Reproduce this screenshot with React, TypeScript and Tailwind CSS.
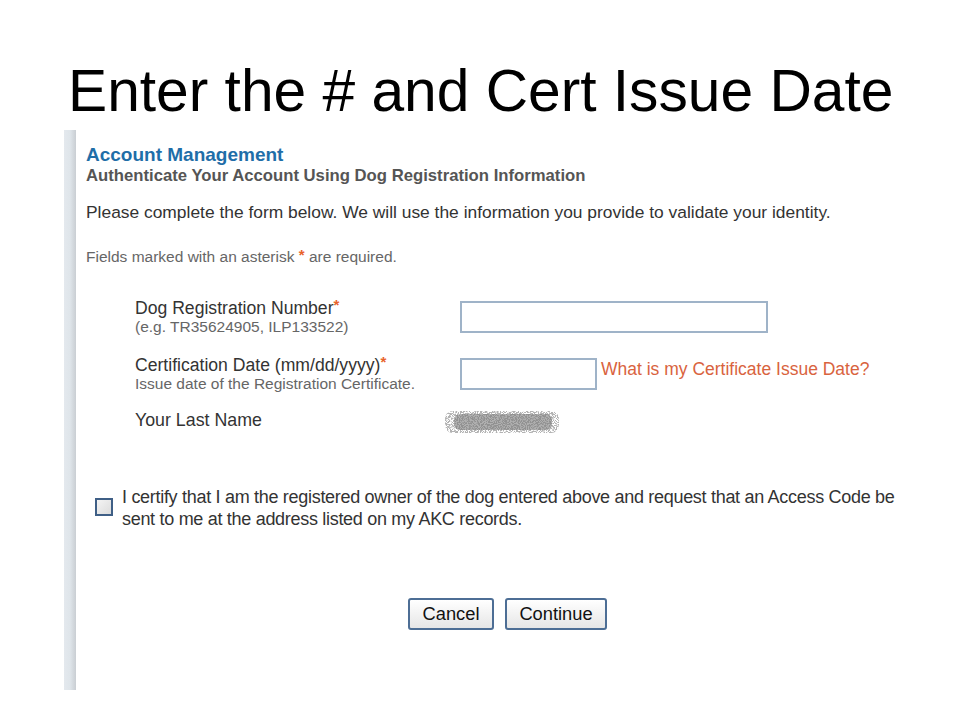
const font = { fontFamily: '"Liberation Sans", Arial, sans-serif' };

const Req = () => <span className="text-[#e8632b] align-top text-[15px] font-bold leading-none">*</span>;

export default function App() {
  return (
    <div className="w-[960px] h-[720px] bg-white overflow-hidden" style={font}>
      <h1 className="text-[58.7px] leading-none text-black pt-[62px] pl-[68px]">
        Enter the # and Cert Issue Date
      </h1>
      <div className="flex mt-[9px] pl-[64px]">
        <div className="w-[12px] h-[560px] bg-gradient-to-r from-[#e4e9ee] via-[#dfe5ea] to-[#c9ced3]" />
        <div className="pl-[10px] pt-[14px] flex-1">
          <div className="text-[19px] font-bold text-[#1f6ea8] leading-[22px]">Account Management</div>
          <div className="text-[16.7px] font-bold text-[#555] leading-[20px]">
            Authenticate Your Account Using Dog Registration Information
          </div>
          <div className="text-[17.4px] text-[#333] mt-[15px] leading-[22px]">
            Please complete the form below. We will use the information you provide to validate your identity.
          </div>
          <div className="text-[15.5px] text-[#666] mt-[24px] leading-[20px]">
            Fields marked with an asterisk <Req /> are required.
          </div>

          <div className="mt-[30px] pl-[49px] flex flex-col">
            <div className="flex h-[57px]">
              <div className="w-[325px]">
                <div className="text-[17.6px] text-[#333] leading-[22px]">Dog Registration Number<Req /></div>
                <div className="text-[15.5px] text-[#666] leading-[16px]">(e.g. TR35624905, ILP133522)</div>
              </div>
              <div className="w-[308px] h-[32px] border-2 border-[#9fb3c8] bg-white mt-[4px]" />
            </div>
            <div className="flex h-[55px]">
              <div className="w-[325px]">
                <div className="text-[17.6px] text-[#333] leading-[22px]">Certification Date (mm/dd/yyyy)<Req /></div>
                <div className="text-[15.5px] text-[#666] leading-[16px]">Issue date of the Registration Certificate.</div>
              </div>
              <div className="w-[137px] h-[32px] border-2 border-[#9fb3c8] bg-white mt-[4px]" />
              <div className="text-[17.5px] text-[#d9633e] ml-[4px] leading-[22px] mt-[4px]">
                What is my Certificate Issue Date?
              </div>
            </div>
            <div className="flex">
              <div className="w-[309px] text-[17.8px] text-[#333] leading-[22px]">Your Last Name</div>
              <svg width="116" height="26" viewBox="0 0 116 26">
                <defs>
                  <filter id="n">
                    <feTurbulence type="fractalNoise" baseFrequency="0.9" numOctaves="2" seed="3" />
                    <feColorMatrix values="0 0 0 0 0.45 0 0 0 0 0.45 0 0 0 0 0.45 0 0 0 9 -4" />
                    <feComposite in2="SourceGraphic" operator="in" />
                  </filter>
                </defs>
                <rect x="1" y="2" width="114" height="22" rx="8" fill="#777" filter="url(#n)" />
                <rect x="10" y="5" width="98" height="16" rx="6" fill="#7a7a7a" opacity="0.6" />
              </svg>
            </div>
          </div>

          <div className="flex mt-[51px] pl-[9px] items-start">
            <div className="w-[18px] h-[18px] border-2 border-[#3f5f86] bg-gradient-to-br from-[#f4f4f4] to-[#dcdcdc] mt-[12px] shrink-0" />
            <div className="ml-[9px] text-[18px] text-[#333] leading-[22px] tracking-[-0.3px]">
              I certify that I am the registered owner of the dog entered above and request that an Access Code be
              <br />
              sent to me at the address listed on my AKC records.
            </div>
          </div>

          <div className="flex gap-[11px] mt-[68px] pl-[322px]">
            <button className="w-[86px] h-[32px] border-2 border-[#4d6e95] rounded-[3px] bg-gradient-to-b from-white to-[#e6e6e6] text-[18.3px] text-[#111]">
              Cancel
            </button>
            <button className="w-[102px] h-[32px] border-2 border-[#4d6e95] rounded-[3px] bg-gradient-to-b from-white to-[#e6e6e6] text-[18.3px] text-[#111]">
              Continue
            </button>
          </div>
        </div>
      </div>
    </div>
  );
}
